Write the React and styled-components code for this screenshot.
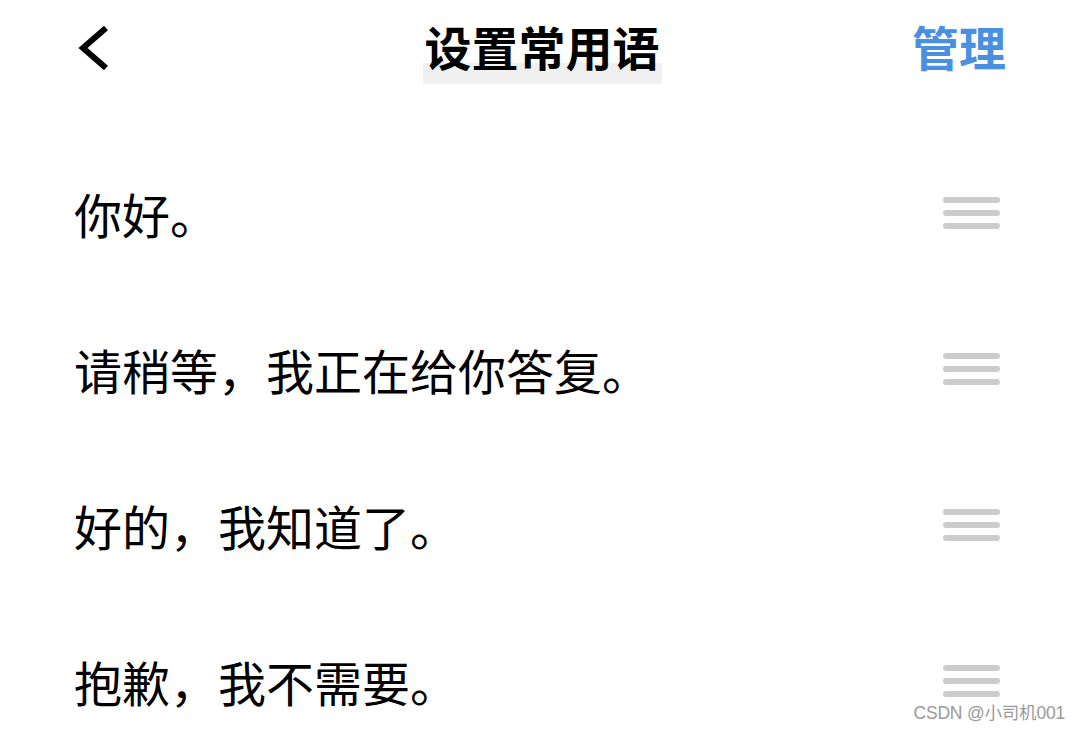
import React from "react";
import styled, { createGlobalStyle } from "styled-components";

const Global = createGlobalStyle`
  html, body { margin: 0; padding: 0; background: #ffffff; }
  body { font-family: "Noto Sans CJK SC", "Noto Sans", sans-serif; }
  #root { width: 1080px; height: 733px; }
`;

const Page = styled.div`
  position: relative;
  width: 1080px;
  height: 733px;
  overflow: hidden;
  background: #ffffff;
  display: flex;
  flex-direction: column;
`;

const Header = styled.header`
  flex-shrink: 0;
  height: 96px;
  display: grid;
  grid-template-columns: 1fr auto 1fr;
  align-items: center;
  padding: 0 74px 0 78px;
`;

const BackButton = styled.button`
  justify-self: start;
  border: 0;
  background: none;
  padding: 0;
  width: 32px;
  height: 44px;
  display: flex;
  align-items: center;
  cursor: pointer;
`;

const Title = styled.h1`
  margin: 10px 0 0;
  font-size: 47px;
  font-weight: 700;
  line-height: 1;
  color: #000;
  padding: 0 2px 15px;
  background: linear-gradient(to bottom, transparent 0, transparent 41px, #f0f0f0 41px, #f0f0f0 100%);
`;

const Manage = styled.button`
  justify-self: end;
  border: 0;
  background: none;
  padding: 0;
  margin: 0 0 5px;
  font-family: inherit;
  font-size: 47px;
  font-weight: 700;
  line-height: 1;
  color: #4a90e2;
  cursor: pointer;
`;

const List = styled.ul`
  list-style: none;
  margin: 0;
  padding: 39px 0 0;
  flex-shrink: 0;
`;

const Row = styled.li`
  height: 156px;
  display: flex;
  align-items: center;
  justify-content: space-between;
  padding: 0 80px 0 74px;
`;

const Phrase = styled.span`
  font-size: 48px;
  line-height: 1;
  color: #000;
`;

const Handle = styled.div`
  width: 57px;
  display: flex;
  flex-direction: column;
  gap: 7px;
`;

const Bar = styled.span`
  display: block;
  height: 6px;
  border-radius: 3px;
  background: #cccccc;
`;

const Watermark = styled.div`
  position: absolute;
  right: 15px;
  bottom: 9px;
  font-family: "Liberation Sans", Arial, "Noto Sans CJK SC", sans-serif;
  font-size: 17.5px;
  color: #9a9a9a;
  letter-spacing: -0.2px;
`;

const phrases = ["你好。", "请稍等，我正在给你答复。", "好的，我知道了。", "抱歉，我不需要。"];

export default function App() {
  return (
    <>
      <Global />
      <Page>
        <Header>
          <BackButton aria-label="返回">
            <svg width="32" height="44" viewBox="0 0 32 44">
              <path d="M28 2 L5 22 L28 42" fill="none" stroke="#000" strokeWidth="6" />
            </svg>
          </BackButton>
          <Title>设置常用语</Title>
          <Manage>管理</Manage>
        </Header>
        <List>
          {phrases.map((p) => (
            <Row key={p}>
              <Phrase>{p}</Phrase>
              <Handle>
                <Bar />
                <Bar />
                <Bar />
              </Handle>
            </Row>
          ))}
        </List>
        <Watermark>CSDN @小司机001</Watermark>
      </Page>
    </>
  );
}
